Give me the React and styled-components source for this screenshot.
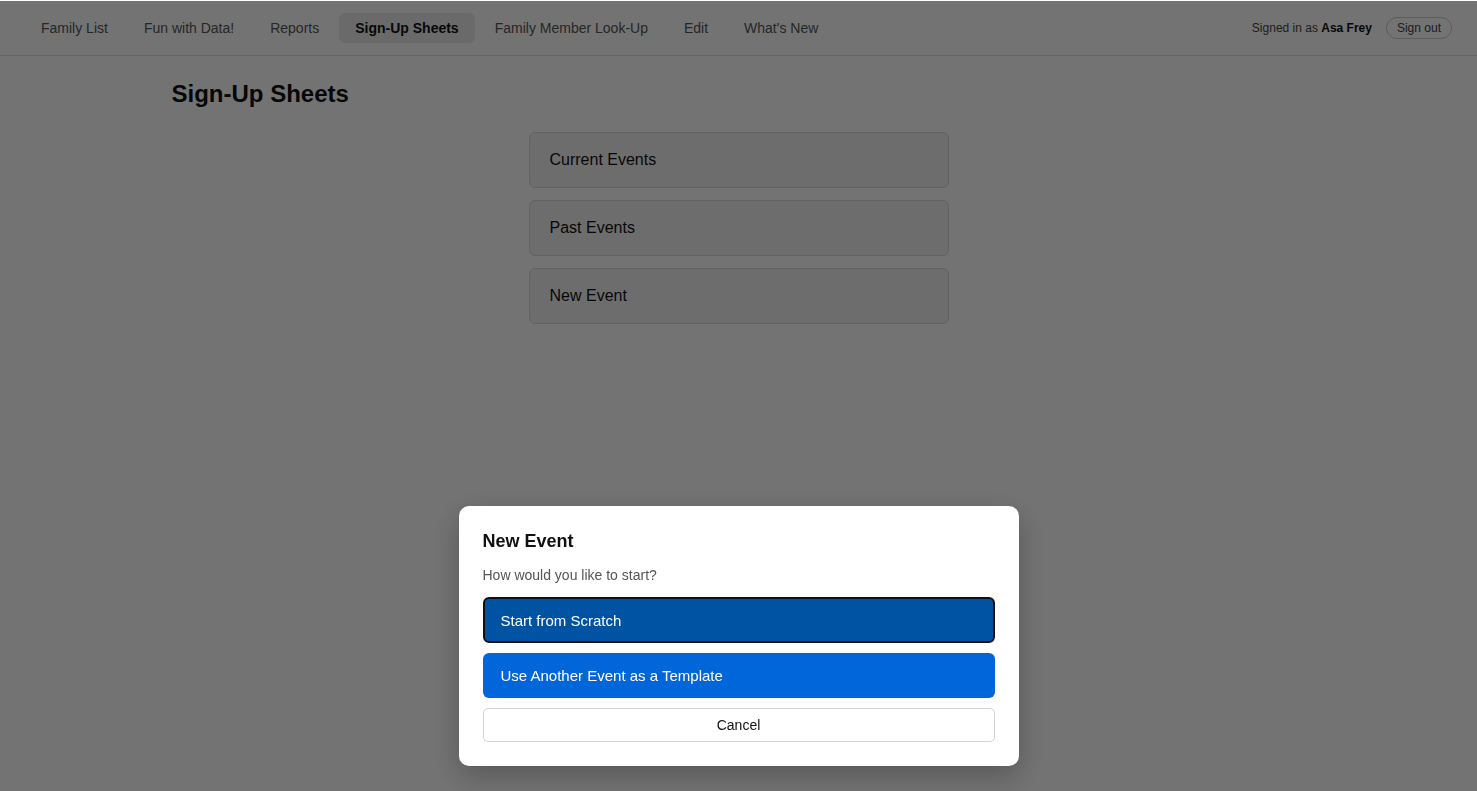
import styled, { createGlobalStyle } from "styled-components";

const GlobalStyle = createGlobalStyle`
  * { box-sizing: border-box; }
  body {
    margin: 0;
    background: #fff;
    font-family: "Liberation Sans", Arial, sans-serif;
    color: #111;
  }
`;

const Header = styled.header`
  height: 56px;
  display: flex;
  align-items: center;
  justify-content: space-between;
  padding: 0 25px;
  border-bottom: 1px solid #ddd;
`;

const Nav = styled.nav`
  display: flex;
  gap: 4px;
`;

const NavItem = styled.a`
  padding: 7px 16px;
  border-radius: 6px;
  font-size: 14px;
  line-height: 16px;
  color: ${(p) => (p.$active ? "#111" : "#555")};
  font-weight: ${(p) => (p.$active ? 700 : 400)};
  background: ${(p) => (p.$active ? "#ececec" : "transparent")};
  text-decoration: none;
`;

const Account = styled.div`
  display: flex;
  align-items: center;
  gap: 14px;
  font-size: 12px;
  color: #444;
  b { color: #111; }
`;

const SignOut = styled.button`
  font: inherit;
  font-size: 12px;
  color: #444;
  background: transparent;
  border: 1px solid #ccc;
  border-radius: 999px;
  padding: 3px 10px;
  height: 22px;
`;

const Main = styled.main`
  max-width: 1158px;
  margin: 0 auto;
  padding: 24px 12px;
`;

const Title = styled.h1`
  margin: 0 0 24px;
  font-size: 24px;
  line-height: 28px;
  font-weight: 700;
`;

const CardList = styled.div`
  width: 420px;
  margin: 0 auto;
  display: flex;
  flex-direction: column;
  gap: 12px;
`;

const Card = styled.div`
  height: 56px;
  display: flex;
  align-items: center;
  padding: 0 20px;
  border: 1px solid #d9d9d9;
  border-radius: 6px;
  background: #f2f2f2;
  font-size: 16px;
`;

const Backdrop = styled.div`
  position: fixed;
  inset: 1px 0 0 0;
  background: rgba(0, 0, 0, 0.55);
  display: flex;
  align-items: flex-end;
  justify-content: center;
  padding-bottom: 25px;
`;

const Dialog = styled.div`
  width: 560px;
  background: #fff;
  border-radius: 10px;
  padding: 24px;
  box-shadow: 0 10px 30px rgba(0, 0, 0, 0.25);
`;

const DialogTitle = styled.h2`
  margin: 0;
  font-size: 18px;
  line-height: 22px;
  font-weight: 700;
`;

const DialogText = styled.p`
  margin: 14px 0 13px;
  font-size: 14px;
  line-height: 18px;
  color: #555;
`;

const Actions = styled.div`
  display: flex;
  flex-direction: column;
  gap: 10px;
`;

const ChoiceButton = styled.button`
  font: inherit;
  font-size: 15px;
  text-align: left;
  color: #fff;
  height: ${(p) => (p.$focused ? "46px" : "45px")};
  padding: 0 18px;
  border-radius: 6px;
  border: ${(p) => (p.$focused ? "2px solid #111" : "none")};
  padding-left: ${(p) => (p.$focused ? "16px" : "18px")};
  background: ${(p) => (p.$focused ? "#0053a3" : "#0066da")};
`;

const CancelButton = styled.button`
  font: inherit;
  font-size: 14px;
  color: #111;
  height: 34px;
  background: #fff;
  border: 1px solid #d4d4d4;
  border-radius: 5px;
`;

const navItems = [
  "Family List",
  "Fun with Data!",
  "Reports",
  "Sign-Up Sheets",
  "Family Member Look-Up",
  "Edit",
  "What's New",
];

export default function App() {
  return (
    <>
      <GlobalStyle />
      <Header>
        <Nav>
          {navItems.map((item) => (
            <NavItem key={item} $active={item === "Sign-Up Sheets"}>
              {item}
            </NavItem>
          ))}
        </Nav>
        <Account>
          <span>
            Signed in as <b>Asa Frey</b>
          </span>
          <SignOut>Sign out</SignOut>
        </Account>
      </Header>
      <Main>
        <Title>Sign-Up Sheets</Title>
        <CardList>
          <Card>Current Events</Card>
          <Card>Past Events</Card>
          <Card>New Event</Card>
        </CardList>
      </Main>
      <Backdrop>
        <Dialog>
          <DialogTitle>New Event</DialogTitle>
          <DialogText>How would you like to start?</DialogText>
          <Actions>
            <ChoiceButton $focused>Start from Scratch</ChoiceButton>
            <ChoiceButton>Use Another Event as a Template</ChoiceButton>
            <CancelButton>Cancel</CancelButton>
          </Actions>
        </Dialog>
      </Backdrop>
    </>
  );
}
